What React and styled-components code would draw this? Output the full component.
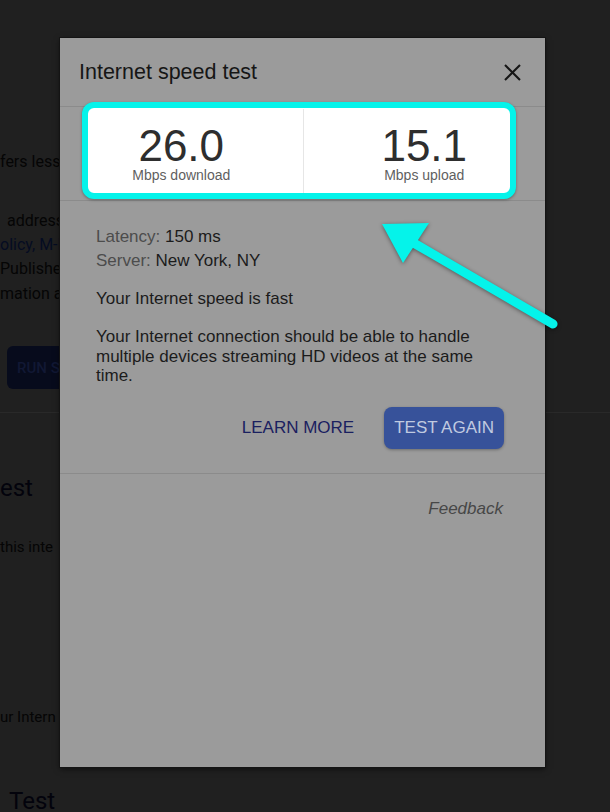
import React from 'react';
import styled, { createGlobalStyle } from 'styled-components';

const GlobalStyle = createGlobalStyle`
  html, body {
    margin: 0;
    padding: 0;
    background: #202020;
    overflow: hidden;
  }
`;

const Screen = styled.div`
  position: relative;
  width: 610px;
  height: 812px;
  overflow: hidden;
  background: #202020;
`;

// dimmed page behind the dialog, only its left strip shows
const Page = styled.div`
  display: flex;
  flex-direction: column;
  align-items: flex-start;
  padding-top: 150px;
  font-family: Roboto, "Liberation Sans", sans-serif;
  color: #050505;
`;

const BgLine = styled.div`
  margin-top: ${(p) => p.$mt || 0}px;
  padding-left: ${(p) => p.$pl || 0}px;
  font-size: ${(p) => p.$size || 16}px;
  line-height: ${(p) => p.$lh || 24}px;
  color: ${(p) => p.$color || '#050505'};
  white-space: nowrap;
`;

const BgLink = styled.span`
  color: #050c22;
`;

const BgButton = styled.div`
  margin-top: 40px;
  margin-left: 7px;
  width: 90px;
  height: 43px;
  border-radius: 6px;
  background: #070b1c;
  color: #111834;
  font-size: 15px;
  font-weight: 500;
  display: flex;
  align-items: center;
  padding-left: 10px;
  box-sizing: border-box;
`;

const BgRule = styled.div`
  align-self: stretch;
  margin-top: 23px;
  height: 1px;
  background: #292929;
`;

const Modal = styled.div`
  position: absolute;
  left: 60px;
  top: 38px;
  width: 485px;
  height: 729px;
  background: #9b9b9b;
  box-shadow: 0 0 0 1px #141414, 0 2px 6px rgba(0, 0, 0, 0.6);
  display: flex;
  flex-direction: column;
  font-family: "Liberation Sans", Arial, sans-serif;
`;

const Header = styled.div`
  height: 68px;
  display: flex;
  align-items: center;
  justify-content: space-between;
  padding: 0 24px 0 19px;
  border-bottom: 1px solid #8b8b8b;
`;

const Title = styled.h2`
  margin: 0;
  font-size: 21.5px;
  font-weight: 400;
  color: #161616;
`;

const CloseButton = styled.button`
  border: none;
  background: none;
  padding: 0;
  width: 17px;
  height: 17px;
  display: flex;
  cursor: pointer;
`;

const Stats = styled.div`
  position: relative;
  height: 93px;
  display: grid;
  grid-template-columns: 1fr 1fr;
  border-bottom: 1px solid #8b8b8b;

  &::before {
    content: '';
    position: absolute;
    left: 22px;
    right: 29px;
    top: -5px;
    bottom: 1px;
    background: #fff;
    border: 6px solid #05f3ea;
    border-radius: 12px;
    box-shadow: 0 1px 3px rgba(0, 0, 0, 0.35);
  }
`;

const Stat = styled.div`
  position: relative;
  z-index: 1;
  display: flex;
  flex-direction: column;
  align-items: center;
  margin: 2px 0 7px;
  padding-top: 15px;
  border-left: ${(p) => (p.$divider ? '1px solid #e6e6e6' : 'none')};
`;

const Value = styled.div`
  font-size: 44px;
  line-height: 44px;
  color: #2e2e2e;
`;

const Unit = styled.div`
  font-size: 14px;
  line-height: 14px;
  color: #5f5f5f;
`;

const Body = styled.div`
  padding: 24px 41px 24px 36px;
  border-bottom: 1px solid #8b8b8b;
  font-size: 17px;
  color: #1b1b1b;
`;

const InfoLine = styled.div`
  line-height: 24px;
`;

const Label = styled.span`
  color: #4c4c4c;
`;

const Status = styled.div`
  margin-top: 14px;
  line-height: 24px;
`;

const Paragraph = styled.p`
  margin: 16px 0 0;
  line-height: 19.5px;
`;

const Actions = styled.div`
  margin-top: 21px;
  display: flex;
  justify-content: flex-end;
  align-items: center;
  gap: 20px;
`;

const TextButton = styled.button`
  height: 42px;
  padding: 0 10px;
  border: none;
  background: none;
  font-family: inherit;
  font-size: 17px;
  color: #1a2060;
  cursor: pointer;
`;

const FilledButton = styled.button`
  height: 42px;
  padding: 0 10px;
  border: none;
  border-radius: 8px;
  background: #37529a;
  color: #c0cae0;
  font-family: inherit;
  font-size: 17px;
  box-shadow: 0 1px 3px rgba(0, 0, 0, 0.3);
  cursor: pointer;
`;

const Footer = styled.div`
  padding: 25px 42px 0 0;
  text-align: right;
`;

const FeedbackLink = styled.span`
  font-style: italic;
  font-size: 17px;
  line-height: 20px;
  color: #474747;
`;

const Annotation = styled.svg`
  position: absolute;
  left: 0;
  top: 0;
  pointer-events: none;
  filter: drop-shadow(0 1px 2px rgba(0, 0, 0, 0.45));
`;

const CloseIcon = () => (
  <svg width="17" height="17" viewBox="0 0 17 17">
    <path d="M1 1 L16 16 M16 1 L1 16" stroke="#161616" strokeWidth="2.1" fill="none" />
  </svg>
);

const results = [
  { value: '26.0', unit: 'Mbps download' },
  { value: '15.1', unit: 'Mbps upload' },
];

export default function App() {
  return (
    <>
      <GlobalStyle />
      <Screen>
        <Page>
          <BgLine>fers less</BgLine>
          <BgLine $mt={35} $pl={7}>address</BgLine>
          <BgLine>
            <BgLink>olicy, M-L</BgLink>
          </BgLine>
          <BgLine>Publisher</BgLine>
          <BgLine $mt={1}>mation ab</BgLine>
          <BgButton>RUN S</BgButton>
          <BgRule />
          <BgLine $mt={59} $size={24} $lh={32} $color="#03030c">est</BgLine>
          <BgLine $mt={31} $size={15}>this inte</BgLine>
          <BgLine $mt={146} $size={15}>ur Intern</BgLine>
          <BgLine $mt={61} $size={24} $lh={22} $pl={9} $color="#03030c">Test</BgLine>
        </Page>

        <Modal>
          <Header>
            <Title>Internet speed test</Title>
            <CloseButton aria-label="Close">
              <CloseIcon />
            </CloseButton>
          </Header>

          <Stats>
            {results.map((r, i) => (
              <Stat key={r.unit} $divider={i > 0}>
                <Value>{r.value}</Value>
                <Unit>{r.unit}</Unit>
              </Stat>
            ))}
          </Stats>

          <Body>
            <InfoLine>
              <Label>Latency:</Label> 150 ms
            </InfoLine>
            <InfoLine>
              <Label>Server:</Label> New York, NY
            </InfoLine>
            <Status>Your Internet speed is fast</Status>
            <Paragraph>
              Your Internet connection should be able to handle multiple devices streaming HD videos at the same time.
            </Paragraph>
            <Actions>
              <TextButton>LEARN MORE</TextButton>
              <FilledButton>TEST AGAIN</FilledButton>
            </Actions>
          </Body>

          <Footer>
            <FeedbackLink>Feedback</FeedbackLink>
          </Footer>
        </Modal>

        <Annotation width="610" height="812" viewBox="0 0 610 812">
          <line x1="412" y1="242" x2="553" y2="324" stroke="#05f3ea" strokeWidth="9" strokeLinecap="round" />
          <polygon points="382,224 429,223 403,263" fill="#05f3ea" />
        </Annotation>
      </Screen>
    </>
  );
}
